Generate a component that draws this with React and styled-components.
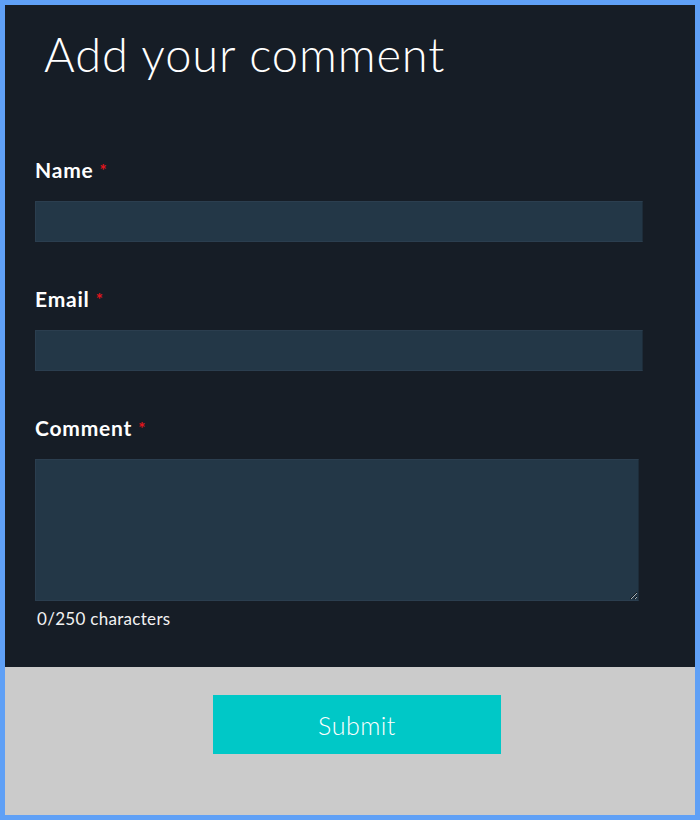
import styled, { createGlobalStyle } from 'styled-components';

const GlobalStyle = createGlobalStyle`
    html, body {
        margin: 0;
        padding: 0;
        background: #5fa0f6;
    }

    * {
        box-sizing: border-box;
    }
`;

const Frame = styled.div`
    width: 700px;
    height: 820px;
    border: 5px solid #5fa0f6;
    display: flex;
    flex-direction: column;
    font-family: Lato, "Open Sans", sans-serif;
`;

const FormPanel = styled.section`
    background: #161d26;
    color: white;
    padding: 21px 30px 38px 30px;
`;

const Title = styled.h2`
    margin: 0 0 75px 9px;
    font-size: 47px;
    line-height: 56px;
    font-weight: 300;
    letter-spacing: 0.9px;
`;

const Field = styled.div`
    display: flex;
    flex-direction: column;
    margin-bottom: 44px;

    &:last-of-type {
        margin-bottom: 0;
    }
`;

const Label = styled.label`
    font-size: 21px;
    line-height: 26px;
    height: 26px;
    font-weight: 700;
    letter-spacing: 0.8px;
    margin-bottom: 18px;
`;

const Required = styled.span`
    position: relative;
    top: 4px;
    color: #e3141c;
    font-size: 17px;
    vertical-align: top;
    line-height: 20px;
    margin-left: 6px;
`;

const inputLook = `
    background: #233747;
    border: 1px solid #2b3e4f;
    border-right-color: #1d2c39;
    color: white;
    font-family: inherit;
    font-size: 16px;
    outline: none;
    padding: 8px 10px;
`;

const Input = styled.input`
    ${inputLook}
    width: 608px;
    height: 41px;
`;

const TextArea = styled.textarea`
    ${inputLook}
    width: 604px;
    height: 142px;
    resize: both;
    display: block;
`;

const Counter = styled.p`
    margin: 8px 0 0 2px;
    font-size: 17px;
    line-height: 20px;
    letter-spacing: 0.3px;
    color: #f2f2f2;
`;

const ActionBar = styled.div`
    flex: 1;
    background: #cbcbcb;
    display: flex;
    justify-content: center;
    align-items: flex-start;
    padding: 28px 0 0 14px;
`;

const SubmitButton = styled.button`
    width: 288px;
    height: 59px;
    background: #00c8c7;
    border: none;
    color: white;
    font-family: inherit;
    font-size: 25px;
    font-weight: 300;
    letter-spacing: 0.5px;
    cursor: pointer;
`;

const fields = [
    { id: 'name', label: 'Name' },
    { id: 'email', label: 'Email' },
];

export default function App() {
    return (
        <>
            <GlobalStyle />
            <Frame>
                <FormPanel>
                    <Title>Add your comment</Title>
                    {fields.map((f) => (
                        <Field key={f.id}>
                            <Label htmlFor={f.id}>
                                {f.label}
                                <Required>*</Required>
                            </Label>
                            <Input id={f.id} type="text" />
                        </Field>
                    ))}
                    <Field>
                        <Label htmlFor="comment">
                            Comment
                            <Required>*</Required>
                        </Label>
                        <TextArea id="comment" />
                        <Counter>0/250 characters</Counter>
                    </Field>
                </FormPanel>
                <ActionBar>
                    <SubmitButton type="button">Submit</SubmitButton>
                </ActionBar>
            </Frame>
        </>
    );
}
